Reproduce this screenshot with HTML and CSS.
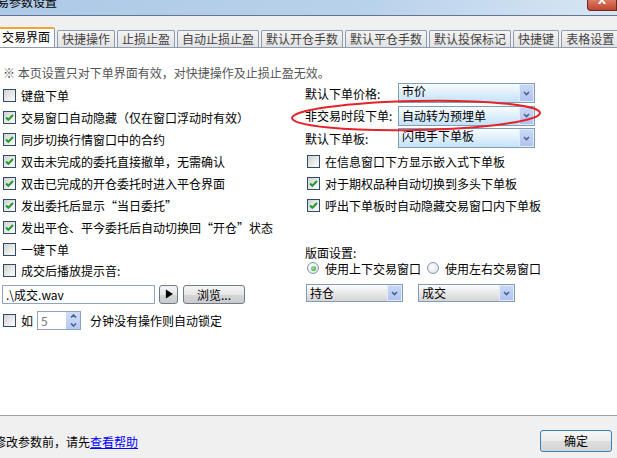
FILE: index.html
```html
<!DOCTYPE html>
<html lang="zh-CN">
<head>
  <meta charset="UTF-8" />
  <title>交易参数设置</title>
  <link rel="stylesheet" href="styles.css">
</head>
<body>

  <!-- barra de título -->
  <div class="titlebar">
    <span class="title">交易参数设置</span>
    <span class="btn-close">X</span>
  </div>

  <!-- pestañas -->
  <div class="tabs">
    <div class="tab active">交易界面</div>
    <div class="tab">快捷操作</div>
    <div class="tab">止损止盈</div>
    <div class="tab">自动止损止盈</div>
    <div class="tab">默认开仓手数</div>
    <div class="tab">默认平仓手数</div>
    <div class="tab">默认投保标记</div>
    <div class="tab">快捷键</div>
    <div class="tab">表格设置</div>
  </div>

  <div class="panel">
    <p class="note">※ 本页设置只对下单界面有效，对快捷操作及止损止盈无效。</p>

    <div class="cols">
      <div class="left">
        <div class="chk"><span class="box"></span>键盘下单</div>
        <div class="chk"><span class="box"><svg viewBox="0 0 11 11"><path d="M2 5.5 L4.3 7.8 L9 3"/></svg></span>交易窗口自动隐藏（仅在窗口浮动时有效）</div>
        <div class="chk"><span class="box"><svg viewBox="0 0 11 11"><path d="M2 5.5 L4.3 7.8 L9 3"/></svg></span>同步切换行情窗口中的合约</div>
        <div class="chk"><span class="box"><svg viewBox="0 0 11 11"><path d="M2 5.5 L4.3 7.8 L9 3"/></svg></span>双击未完成的委托直接撤单，无需确认</div>
        <div class="chk"><span class="box"><svg viewBox="0 0 11 11"><path d="M2 5.5 L4.3 7.8 L9 3"/></svg></span>双击已完成的开仓委托时进入平仓界面</div>
        <div class="chk"><span class="box"><svg viewBox="0 0 11 11"><path d="M2 5.5 L4.3 7.8 L9 3"/></svg></span>发出委托后显示“当日委托”</div>
        <div class="chk"><span class="box"><svg viewBox="0 0 11 11"><path d="M2 5.5 L4.3 7.8 L9 3"/></svg></span>发出平仓、平今委托后自动切换回“开仓”状态</div>
        <div class="chk"><span class="box"></span>一键下单</div>
        <div class="chk"><span class="box"></span>成交后播放提示音:</div>

        <div class="file-row">
          <span class="text-in">.\成交.wav</span>
          <span class="btn play"><svg viewBox="0 0 9 10"><polygon points="1,0 9,5 1,10"/></svg></span>
          <span class="btn browse">浏览...</span>
        </div>

        <div class="lock-row">
          <span class="box"></span>
          <span class="ru">如</span>
          <span class="spin">
            <span class="spin-val">5</span>
            <span class="spin-btns">
              <svg viewBox="0 0 7 4"><path d="M1 3.5 L3.5 1 L6 3.5"/></svg>
              <svg viewBox="0 0 7 4"><path d="M1 0.5 L3.5 3 L6 0.5"/></svg>
            </span>
          </span>
          <span class="lock-txt">分钟没有操作则自动锁定</span>
        </div>
      </div>

      <div class="right">
        <div class="field">
          <span class="lbl">默认下单价格:</span>
          <div class="combo blue up"><span class="val">市价</span><span class="arr"><svg viewBox="0 0 7 5"><path d="M1 1 L3.5 3.5 L6 1"/></svg></span></div>
        </div>
        <div class="field">
          <span class="lbl">非交易时段下单:</span>
          <div class="combo blue"><span class="val">自动转为预埋单</span><span class="arr"><svg viewBox="0 0 7 5"><path d="M1 1 L3.5 3.5 L6 1"/></svg></span></div>
        </div>
        <div class="field">
          <span class="lbl">默认下单板:</span>
          <div class="combo blue up"><span class="val">闪电手下单板</span><span class="arr"><svg viewBox="0 0 7 5"><path d="M1 1 L3.5 3.5 L6 1"/></svg></span></div>
        </div>

        <div class="chk rchk"><span class="box"></span>在信息窗口下方显示嵌入式下单板</div>
        <div class="chk rchk"><span class="box"><svg viewBox="0 0 11 11"><path d="M2 5.5 L4.3 7.8 L9 3"/></svg></span>对于期权品种自动切换到多头下单板</div>
        <div class="chk rchk"><span class="box"><svg viewBox="0 0 11 11"><path d="M2 5.5 L4.3 7.8 L9 3"/></svg></span>呼出下单板时自动隐藏交易窗口内下单板</div>

        <div class="layout-lbl">版面设置:</div>
        <div class="radios">
          <span class="radio on"></span><span>使用上下交易窗口</span>
          <span class="radio"></span><span>使用左右交易窗口</span>
        </div>
        <div class="combos">
          <div class="combo gray"><span class="val">持仓</span><span class="arr"><svg viewBox="0 0 7 5"><path d="M1 1 L3.5 3.5 L6 1"/></svg></span></div>
          <div class="combo gray"><span class="val">成交</span><span class="arr"><svg viewBox="0 0 7 5"><path d="M1 1 L3.5 3.5 L6 1"/></svg></span></div>
        </div>
      </div>
    </div>

    <!-- marca roja a mano -->
    <svg class="ring" viewBox="0 0 617 367">
      <ellipse cx="416" cy="67.5" rx="124" ry="14.5" transform="rotate(-1.2 416 67.5)"/>
    </svg>
  </div>

  <div class="footer">
    <span class="help">修改参数前，请先<a href="#">查看帮助</a></span>
    <span class="ok">确定</span>
  </div>

</body>
</html>
```

FILE: styles.css
```css
* {
  margin: 0;
  padding: 0;
  box-sizing: border-box;
}

body {
  width: 617px;
  height: 458px;
  overflow: hidden;
  font-family: "Noto Sans CJK SC", "Noto Sans", sans-serif;
  font-size: 12px;
  color: #000;
  background: #f0f0f0;
}

/* barra de título */
.titlebar {
  height: 16px;
  display: flex;
  justify-content: space-between;
  overflow: hidden;
  border-bottom: 1px solid #62778f;
  background: linear-gradient(to right, #adc9e6, #b9d2eb 60%, #d8e6f4);
}

.title {
  margin: -5px 0 0 -15px;
  line-height: 14px;
}

.btn-close {
  width: 30px;
  height: 11px;
  border: 1px solid #6b2a20;
  border-top: none;
  border-radius: 0 0 0 4px;
  background: linear-gradient(#dc7a63, #bf4631);
  color: #fff;
  font-family: "DejaVu Sans", sans-serif;
  font-weight: bold;
  font-size: 11px;
  line-height: 2px;
  text-align: center;
}

/* pestañas */
.tabs {
  height: 32px;
  display: flex;
  align-items: flex-end;
  overflow: hidden;
  border-bottom: 1px solid #8c9cae;
}

.tab {
  flex: none;
  height: 17px;
  margin-right: 2px;
  padding: 0 4px;
  border: 1px solid #8c9cae;
  border-bottom: none;
  border-radius: 2px 2px 0 0;
  background: linear-gradient(#f4f4f4, #e2e2e2);
  color: #444;
  line-height: 15px;
}

.tab.active {
  height: 21px;
  margin: 0 2px -1px -3px;
  border-top: 2px solid #f2a33a;
  background: #fff;
  color: #000;
  line-height: 16px;
}

/* panel */
.panel {
  position: relative;
  height: 367px;
  padding: 18px 0 0 3px;
  background: #fff;
}

.note {
  height: 14px;
  line-height: 14px;
  color: #555;
}

.cols {
  display: flex;
}

.left {
  width: 302px;
  padding-top: 5px;
}

.chk {
  display: flex;
  align-items: center;
  gap: 5px;
  height: 21.875px;
  white-space: nowrap;
}

.box {
  flex: none;
  width: 13px;
  height: 13px;
  display: flex;
  align-items: center;
  justify-content: center;
  border: 1px solid #2f4b69;
  background: linear-gradient(135deg, #d2d2d2, #fdfdfd);
}

.box svg {
  width: 11px;
  height: 11px;
}

.box path {
  fill: none;
  stroke: #1f9e2b;
  stroke-width: 2;
}

.file-row {
  display: flex;
  height: 19px;
  margin: 3px 0 0 -1px;
}

.text-in {
  width: 153px;
  padding-left: 3px;
  border: 1px solid #8ea4c1;
  line-height: 17px;
}

.btn {
  display: flex;
  align-items: center;
  justify-content: center;
  border: 1px solid #6f7b8c;
  border-radius: 3px;
  background: linear-gradient(#f6f6f6, #e6e6e6 50%, #d6d6d6 51%, #cbcbcb);
}

.play {
  width: 19px;
  margin-left: 4px;
}

.play svg {
  width: 8px;
  height: 10px;
}

.browse {
  width: 62px;
  margin-left: 5px;
}

.lock-row {
  display: flex;
  align-items: center;
  height: 19px;
  margin-top: 7px;
}

.ru {
  margin-left: 5px;
}

.spin {
  display: flex;
  width: 44px;
  height: 19px;
  margin-left: 4px;
  border: 1px solid #8ea4c1;
}

.spin-val {
  flex: 1;
  padding-left: 3px;
  color: #777;
  line-height: 17px;
}

.spin-btns {
  width: 14px;
  display: flex;
  flex-direction: column;
  justify-content: space-around;
  align-items: center;
  background: linear-gradient(#d0ddf7, #b5c9f1);
}

.spin-btns svg {
  width: 7px;
  height: 4px;
}

.spin-btns path,
.arr path {
  fill: none;
  stroke: #4d6185;
  stroke-width: 1.6;
}

.lock-txt {
  margin-left: 9px;
}

/* columna derecha */
.right {
  flex: 1;
  padding-top: 3px;
}

.field {
  display: flex;
  align-items: center;
  height: 20px;
  margin-bottom: 2.5px;
}

.lbl {
  width: 93px;
  white-space: nowrap;
}

.combo {
  display: flex;
  width: 137px;
  height: 20px;
  overflow: hidden;
  border: 1px solid #7f9db9;
}

.combo.blue {
  background: linear-gradient(#f8fcfe, #c4e2f8);
}

.combo.gray {
  width: 97px;
  height: 18px;
  background: linear-gradient(#fdfdfd, #d4d4d4);
}

.val {
  flex: 1;
  padding-left: 3px;
  line-height: 18px;
  white-space: nowrap;
}

.combo.up .val {
  margin-top: -2px;
}

.combo.gray .val {
  line-height: 16px;
}

.arr {
  width: 15px;
  display: flex;
  align-items: center;
  justify-content: center;
  border: 1px solid #e4ecfb;
  background: linear-gradient(#c8d7f6, #b0c4ef);
}

.arr svg {
  width: 7px;
  height: 5px;
}

.rchk {
  margin-left: 2px;
  height: 22px;
}

.layout-lbl {
  height: 15px;
  margin-top: 28.5px;
  line-height: 15px;
}

.radios {
  display: flex;
  align-items: center;
  gap: 6px;
  height: 16px;
  margin-left: 2px;
  white-space: nowrap;
}

.radio {
  flex: none;
  width: 12px;
  height: 12px;
  display: flex;
  align-items: center;
  justify-content: center;
  border: 1px solid #8396b0;
  border-radius: 50%;
  background: radial-gradient(circle at 40% 40%, #fff, #d8dce2);
}

.radio.on::after {
  content: '';
  width: 5px;
  height: 5px;
  border-radius: 50%;
  background: radial-gradient(circle at 40% 40%, #9ce89c, #249a24);
}

.combos {
  display: flex;
  gap: 15px;
  margin: 8px 0 0 1px;
}

.ring {
  position: absolute;
  left: 0;
  top: 0;
  width: 617px;
  height: 367px;
  pointer-events: none;
}

.ring ellipse {
  fill: none;
  stroke: #e3242b;
  stroke-width: 2;
}

/* pie */
.footer {
  height: 43px;
  display: flex;
  align-items: center;
  justify-content: space-between;
  padding-top: 8px;
  border-top: 1px solid #a0a0a0;
}

.help {
  margin-left: -6px;
  white-space: nowrap;
}

.help a {
  color: #0000ff;
  text-decoration: underline;
}

.ok {
  width: 72px;
  height: 22px;
  margin-right: 5px;
  border: 1px solid #3c7fb1;
  border-radius: 3px;
  background: linear-gradient(#f6f6f6, #ececec 50%, #dedede 51%, #d4d4d4);
  text-align: center;
  line-height: 20px;
}
```
